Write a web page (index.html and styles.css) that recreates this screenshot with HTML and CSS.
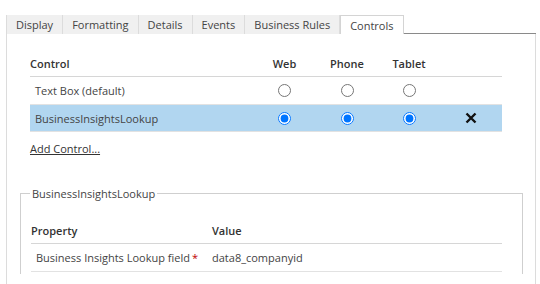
FILE: index.html
```html
<!DOCTYPE html>
<html lang="en">
<head>
    <meta charset="UTF-8">
    <title>Field Properties - Controls</title>
    <link rel="stylesheet" href="styles.css">
</head>
<body>
    <div class="tabs">
        <div class="tab">Display</div>
        <div class="tab">Formatting</div>
        <div class="tab">Details</div>
        <div class="tab">Events</div>
        <div class="tab">Business Rules</div>
        <div class="tab active">Controls</div>
        <div class="tab-rest"></div>
    </div>

    <div class="panel">
        <div class="controls-grid">
            <div class="cell head">Control</div>
            <div class="cell head center">Web</div>
            <div class="cell head center">Phone</div>
            <div class="cell head center">Tablet</div>
            <div class="cell head"></div>

            <div class="cell name">Text Box (default)</div>
            <div class="cell center"><input type="radio" name="web"></div>
            <div class="cell center"><input type="radio" name="phone"></div>
            <div class="cell center"><input type="radio" name="tablet"></div>
            <div class="cell"></div>

            <div class="cell name selected">BusinessInsightsLookup</div>
            <div class="cell center selected"><input type="radio" name="web" checked></div>
            <div class="cell center selected"><input type="radio" name="phone" checked></div>
            <div class="cell center selected"><input type="radio" name="tablet" checked></div>
            <div class="cell center selected">
                <svg class="remove" width="12" height="12" viewBox="0 0 12 12">
                    <path d="M1.5 1.5 L10.5 10.5 M10.5 1.5 L1.5 10.5" stroke="#111" stroke-width="2.4" />
                </svg>
            </div>
        </div>

        <a class="add-control" href="#">Add Control...</a>

        <fieldset class="props">
            <legend>BusinessInsightsLookup</legend>
            <div class="props-grid">
                <div class="cell head">Property</div>
                <div class="cell head">Value</div>
                <div class="cell name">Business Insights Lookup field <span class="req">*</span></div>
                <div class="cell">data8_companyid</div>
            </div>
        </fieldset>
    </div>
</body>
</html>
```

FILE: styles.css
```css
* {
    box-sizing: border-box;
    margin: 0;
    padding: 0;
}

body {
    background-color: #fff;
    color: #444;
    font-family: "Open Sans", "Noto Sans", sans-serif;
    font-size: 11px;
    height: 100vh;
    overflow: hidden;
}

.tabs {
    display: flex;
    margin-top: 15px;
    padding-left: 6px;
    height: 19px;
}

.tab {
    background-color: #f0f0f0;
    border-right: 1px solid #dcdcdc;
    padding: 0 9px;
    line-height: 19px;
    color: #444;
}

.tab:first-child {
    border-left: 1px solid #dcdcdc;
}

.tab.active {
    background-color: #fff;
    border: 1px solid #d4d4d4;
    border-bottom: none;
    padding: 0 9px;
}

.tab-rest {
    flex: 1;
    margin-right: 4px;
    border-bottom: 1px solid #8a8a8a;
}

.panel {
    margin-left: 6px;
    margin-right: 4px;
    border-left: 1px solid #dcdcdc;
    border-right: 1px solid #dcdcdc;
    height: 250px;
    padding-top: 16px;
}

.controls-grid {
    display: grid;
    grid-template-columns: 223px 63px 62px 62px 62px;
    margin-left: 23px;
    width: 472px;
}

.cell {
    height: 28px;
    display: flex;
    align-items: center;
    border-bottom: 1px solid #e2e2e2;
}

.cell.head {
    height: 27px;
    font-weight: 600;
    color: #333;
    border-bottom: 1px solid #d6d6d6;
}

.cell.center {
    justify-content: center;
}

.cell.name {
    padding-left: 5px;
}

.cell.selected {
    background-color: #b1d6f0;
    height: 27px;
}

input[type="radio"] {
    width: 13px;
    height: 13px;
    margin: 0;
}

.add-control {
    display: inline-block;
    margin: 9px 0 0 23px;
    color: #333;
    text-decoration: underline;
    line-height: 16px;
}

.props {
    margin: 29px 12px 0 13px;
    border: 1px solid #cfcfcf;
    border-bottom: none;
    padding: 16px 20px 0 10px;
    height: 88px;
}

.props legend {
    margin-left: -1px;
    padding: 0 2px;
    color: #444;
}

.props-grid {
    display: grid;
    grid-template-columns: 181px 1fr;
}

.req {
    color: #c00000;
    margin-left: 2px;
}
```
